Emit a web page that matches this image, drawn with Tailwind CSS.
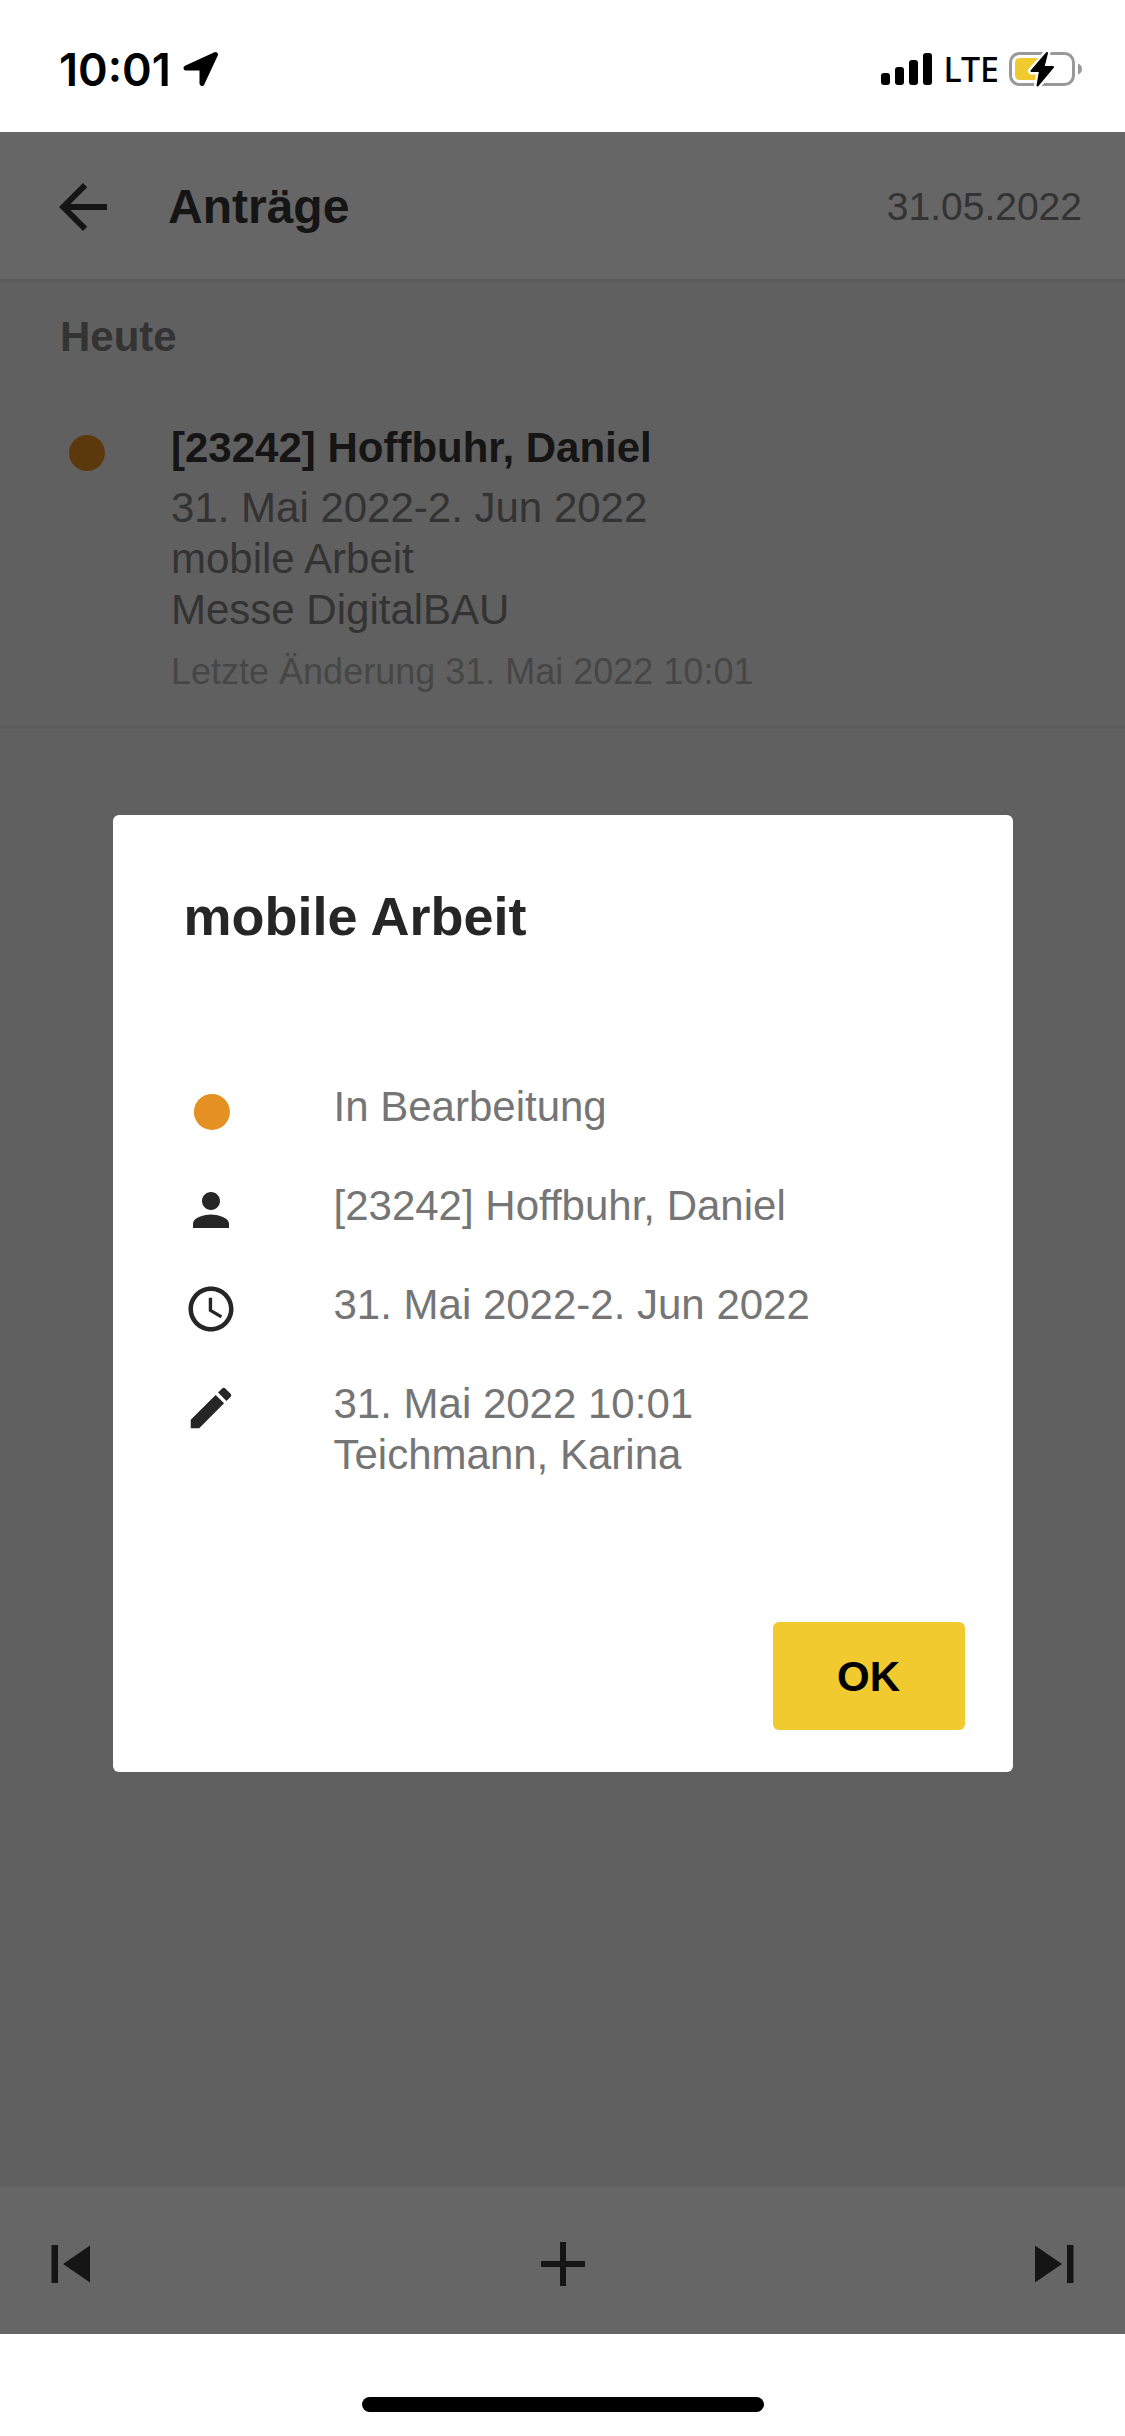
<!DOCTYPE html>
<html lang="de">
<head>
<meta charset="utf-8">
<meta name="viewport" content="width=device-width, initial-scale=1">
<title>Anträge</title>
<script src="https://cdn.jsdelivr.net/npm/@tailwindcss/browser@4"></script>
</head>
<body class="min-h-screen flex flex-col bg-white font-['Liberation_Sans',Arial,sans-serif] text-[42px] leading-[51px]">

  <!-- Status bar -->
  <div class="h-[132px] shrink-0 flex items-center justify-between pt-[6px] pl-[59px] pr-[42px] text-black">
    <div class="flex items-center gap-[12px]">
      <span class="font-['Inter',sans-serif] font-semibold text-[45px]">10:01</span>
      <svg class="w-[36px] h-[36px]" viewBox="0 0 36 36" aria-hidden="true"><path d="M3 17 L32.500 3.500 L19 32.500 V17 Z" fill="#000" stroke="#000" stroke-width="5" stroke-linejoin="round"/></svg>
    </div>
    <div class="flex items-center gap-[10px]">
      <svg class="w-[52px] h-[36px]" viewBox="0 0 52 36" aria-hidden="true">
        <rect x="0" y="22" width="9" height="12" rx="3"/><rect x="14" y="16" width="9" height="18" rx="3"/><rect x="28" y="9" width="9" height="25" rx="3"/><rect x="42" y="2" width="9" height="32" rx="3"/>
      </svg>
      <span class="font-['Noto_Sans',sans-serif] font-medium text-[34px]">LTE</span>
      <svg class="w-[74px] h-[36px]" viewBox="0 0 74 36" aria-hidden="true">
        <rect x="1.500" y="2.500" width="63" height="31" rx="9" fill="none" stroke="#999" stroke-width="3"/>
        <path d="M11 7 H30 V29 H11 Q6 29 6 24 V12 Q6 7 11 7 Z" fill="#f0ca2f"/>
        <path d="M69 12.500 Q73 14 73 18 Q73 22 69 23.500 Z" fill="#999"/>
        <path d="M38 2 L22.500 20 H31 L28.500 34.500 L44 16 H34.500 Z" fill="#fff" stroke="#fff" stroke-width="7" stroke-linejoin="round"/>
        <path d="M38 2 L22.500 20 H31 L28.500 34.500 L44 16 H34.500 Z" fill="#000" stroke="#000" stroke-width="2" stroke-linejoin="round"/>
      </svg>
    </div>
  </div>

  <div class="relative grow flex flex-col bg-[#f0f0f0]">
    <header class="h-[150px] shrink-0 flex items-center bg-white border-b-3 border-[#e6e6e6] pt-[2px] pl-[47px] pr-[43px] text-[#363636]">
      <button class="size-[72px] mr-[49px]" aria-label="Zurück">
        <svg class="size-[72px]" viewBox="0 0 24 24" fill="currentColor" aria-hidden="true"><path d="M20 11H7.830l5.590-5.590L12 4l-8 8 8 8 1.410-1.410L7.830 13H20v-2z"/></svg>
      </button>
      <h1 class="grow font-bold text-[48px]">Anträge</h1>
      <time datetime="2022-05-31" class="text-[39px] text-[#808080]">31.05.2022</time>
    </header>

    <main class="grow">
      <h2 class="pt-[29px] pl-[60px] font-bold text-[#808080]">Heute</h2>
      <ul>
        <li class="flex pt-[60px] pb-[33px] pl-[69px] border-b-3 border-[#e6e6e6]">
          <span class="size-[36px] mt-[13px] mr-[66px] shrink-0 rounded-full bg-[#e59022]"></span>
          <div>
            <h3 class="font-bold text-[#363636] mb-[9px]">[23242] Hoffbuhr, Daniel</h3>
            <p class="text-[#808080]">31. Mai 2022-2. Jun 2022</p>
            <p class="text-[#808080]">mobile Arbeit</p>
            <p class="text-[#808080]">Messe DigitalBAU</p>
            <p class="mt-[16px] text-[36px] leading-[42px] text-[#b0b0b0]">Letzte Änderung 31. Mai 2022 10:01</p>
          </div>
        </li>
      </ul>
    </main>

    <footer class="h-[147px] shrink-0 flex items-center justify-between bg-white px-[51px] pt-[6px] text-[#363636]">
      <button aria-label="Vorheriger Tag"><svg class="w-[39px] h-[38px]" viewBox="0 0 39 38" fill="currentColor" aria-hidden="true"><path d="M.500 0H7V38H.500ZM39 .500V37.500L12 19Z"/></svg></button>
      <button aria-label="Neuer Antrag"><svg class="size-[44px]" viewBox="0 0 44 44" fill="currentColor" aria-hidden="true"><path d="M19 0h6v19h19v6H25v19h-6V25H0v-6h19Z"/></svg></button>
      <button aria-label="Nächster Tag"><svg class="w-[39px] h-[38px]" viewBox="0 0 39 38" fill="currentColor" aria-hidden="true"><path d="M32 0H38.500V38H32ZM0 .500V37.500L27 19Z"/></svg></button>
    </footer>

    <!-- Dimmed backdrop with the detail dialog -->
    <div class="absolute inset-0 flex items-center justify-center pt-[121px] bg-black/60">
      <section role="dialog" aria-modal="true" aria-labelledby="dialog-title" class="w-4/5 rounded-[6px] bg-white pt-[71px] pb-[42px] pl-[71px] pr-[48px]">
        <h2 id="dialog-title" class="font-bold text-[54px] leading-[60px] text-[#262626]">mobile Arbeit</h2>
        <ul class="mt-[135px] flex flex-col gap-[42px] text-[#757575]">
          <li class="flex gap-[96px]">
            <svg class="size-[54px] mt-[3px] shrink-0" viewBox="0 0 24 24" aria-hidden="true"><circle cx="12.400" cy="12.400" r="8" fill="#e59022"/></svg>
            <span>In Bearbeitung</span>
          </li>
          <li class="flex gap-[96px]">
            <svg class="size-[54px] mt-[3px] shrink-0" viewBox="0 0 24 24" fill="#262626" aria-hidden="true"><path d="M12 12c2.210 0 4-1.790 4-4s-1.790-4-4-4-4 1.790-4 4 1.790 4 4 4zm0 2c-2.670 0-8 1.340-8 4v2h16v-2c0-2.660-5.330-4-8-4z"/></svg>
            <span>[23242] Hoffbuhr, Daniel</span>
          </li>
          <li class="flex gap-[96px]">
            <svg class="size-[54px] mt-[3px] shrink-0" viewBox="0 0 24 24" fill="#262626" aria-hidden="true"><path d="M11.990 2C6.470 2 2 6.480 2 12s4.470 10 9.990 10C17.520 22 22 17.520 22 12S17.520 2 11.990 2zM12 20c-4.420 0-8-3.580-8-8s3.580-8 8-8 8 3.580 8 8-3.580 8-8 8zm.500-13H11v6l5.250 3.150.750-1.230-4.500-2.670z"/></svg>
            <span>31. Mai 2022-2. Jun 2022</span>
          </li>
          <li class="flex gap-[96px]">
            <svg class="size-[54px] mt-[3px] shrink-0" viewBox="0 0 24 24" fill="#262626" aria-hidden="true"><path d="M3 17.250V21h3.750L17.810 9.940l-3.750-3.750L3 17.250zM20.710 7.040c.390-.390.390-1.020 0-1.410l-2.340-2.340c-.390-.390-1.020-.390-1.410 0l-1.830 1.830 3.750 3.750 1.830-1.830z"/></svg>
            <span>31. Mai 2022 10:01<br>Teichmann, Karina</span>
          </li>
        </ul>
        <div class="mt-[142px] flex justify-end">
          <button class="w-[192px] h-[108px] rounded-[6px] bg-[#f0ca2f] font-bold text-black">OK</button>
        </div>
      </section>
    </div>
  </div>

  <!-- Home indicator -->
  <div class="h-[102px] shrink-0 flex items-end justify-center pb-[24px]">
    <div class="w-[402px] h-[15px] rounded-full bg-black"></div>
  </div>
</body>
</html>
